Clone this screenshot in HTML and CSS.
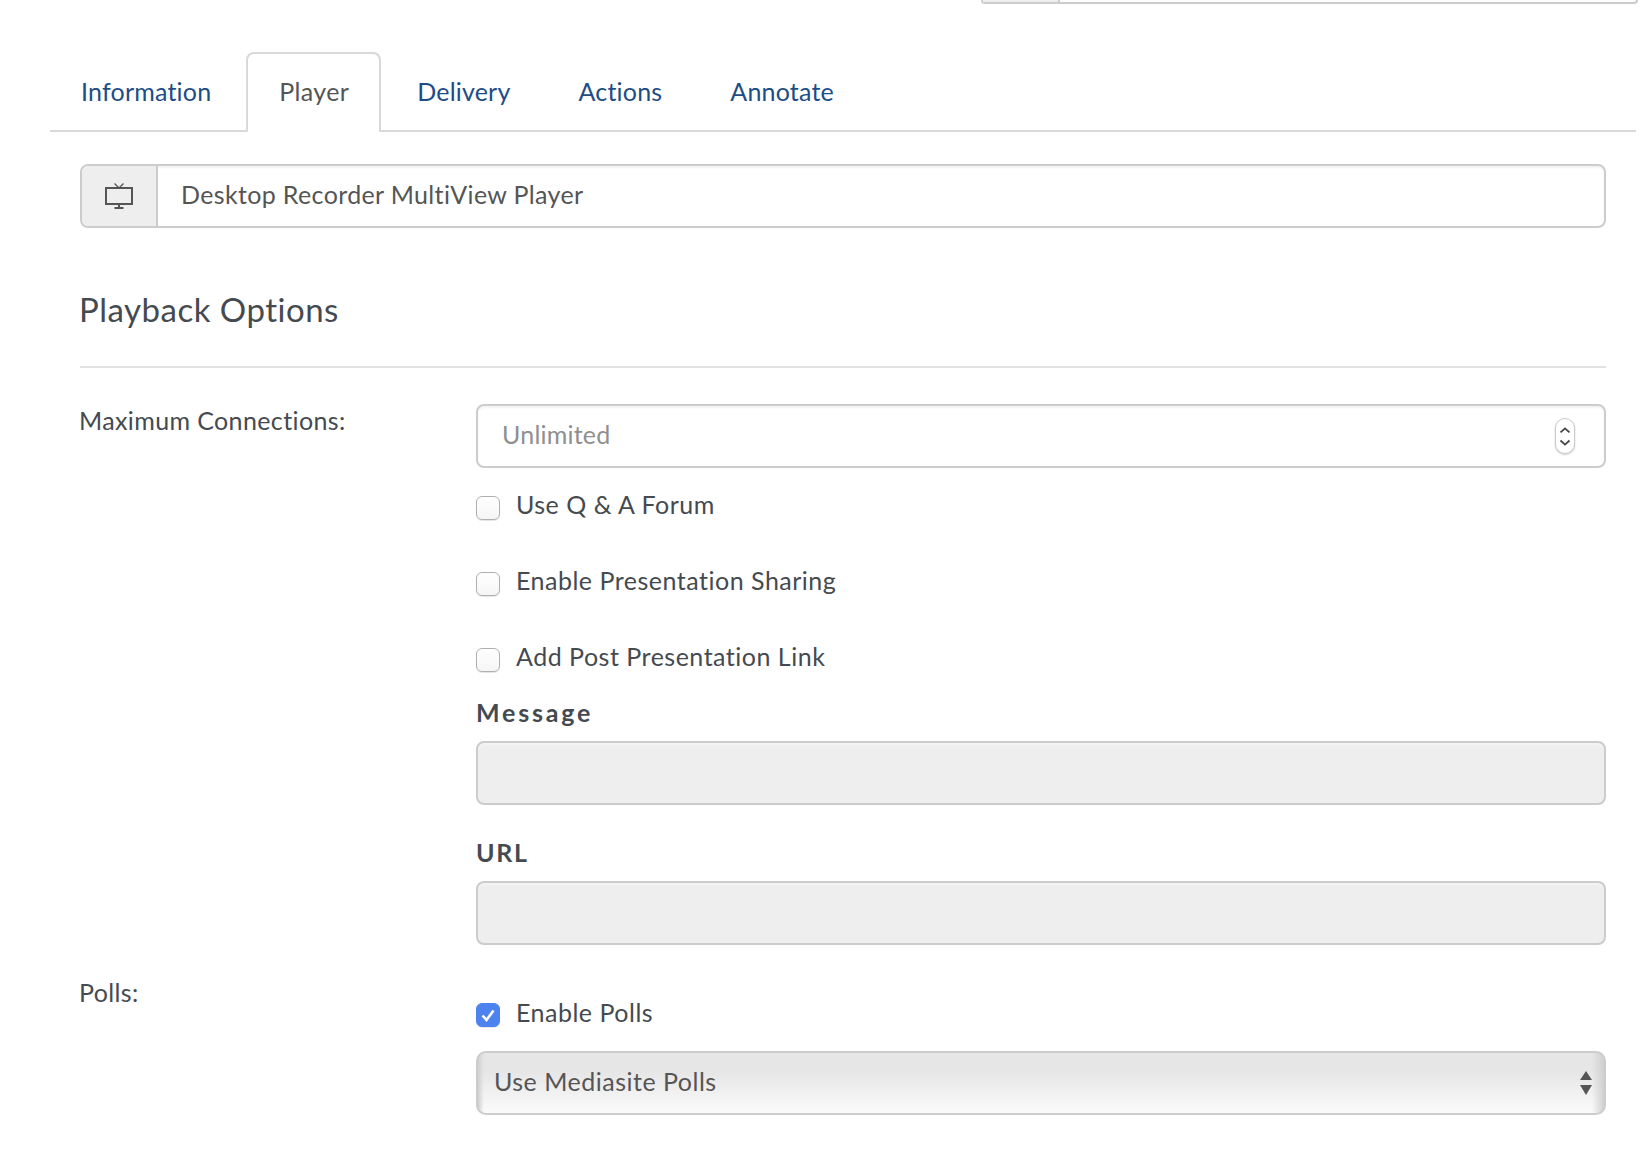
FILE: index.html
```html
<!DOCTYPE html>
<html lang="en">
<head>
<meta charset="utf-8">
<title>Player</title>
<link rel="stylesheet" href="styles.css">
</head>
<body>
<div class="top-strip"><div class="top-field"><span class="top-addon"></span></div></div>
<nav class="tabs">
  <a class="tab">Information</a>
  <a class="tab active">Player</a>
  <a class="tab">Delivery</a>
  <a class="tab">Actions</a>
  <a class="tab">Annotate</a>
</nav>
<main class="content">
  <div class="input-group">
    <span class="addon">
      <svg class="tv" width="30" height="28" viewBox="0 0 30 28" fill="none" stroke="#555" stroke-width="2">
        <rect x="2" y="6" width="26" height="16"/>
        <path d="M15 6 10.500 1.500M15 6 19.500 1.500" stroke-width="1.300"/>
        <path d="M15 22v3M10.500 26h9"/>
      </svg>
    </span>
    <span class="group-value">Desktop Recorder MultiView Player</span>
  </div>
  <h2 class="section-title">Playback Options</h2>
  <div class="form-row first-row">
    <div class="row-label">Maximum Connections:</div>
    <div class="row-body">
      <div class="field number">
        <span class="placeholder">Unlimited</span>
        <span class="spinner">
          <svg width="20" height="36" viewBox="0 0 20 36" fill="none" stroke="#444" stroke-width="2"><path d="M5 14 10 9.500 15 14M5 23 10 27.500 15 23"/></svg>
        </span>
      </div>
      <label class="check first"><span class="box"></span>Use Q &amp; A Forum</label>
      <label class="check"><span class="box"></span>Enable Presentation Sharing</label>
      <label class="check"><span class="box"></span>Add Post Presentation Link</label>
      <div class="sub-label">Message</div>
      <div class="field disabled"></div>
      <div class="sub-label url">URL</div>
      <div class="field disabled"></div>
    </div>
  </div>
  <div class="form-row polls-row">
    <div class="row-label polls-label">Polls:</div>
    <div class="row-body">
      <label class="check polls-check"><span class="box on"><svg width="24" height="24" viewBox="0 0 24 24" fill="none" stroke="#fff" stroke-width="2.600"><path d="M6.500 12.500 10.500 17 17.500 7.500"/></svg></span>Enable Polls</label>
      <div class="select">
        <span class="select-value">Use Mediasite Polls</span>
        <svg width="14" height="24" viewBox="0 0 14 24" fill="#555"><path d="M7 0 13 9H1zM1 14H13L7 24z"/></svg>
      </div>
    </div>
  </div>
</main>
</body>
</html>
```
FILE: styles.css
```css
* { box-sizing: border-box; }
html, body { margin: 0; padding: 0; background: #fff; }
body {
  width: 1652px;
  height: 1152px;
  overflow: hidden;
  font-family: "Lato", "Open Sans", sans-serif;
  font-size: 25px;
  color: #454a50;
}
.top-strip { height: 52px; display: flex; justify-content: flex-end; padding-right: 14px; }
.top-field {
  width: 657px; height: 4px;
  border: 2px solid #ccc; border-top: 0;
  border-radius: 0 0 8px 8px;
  background: #fff;
}
.top-addon { display: block; width: 77px; height: 2px; background: #eee; border-right: 2px solid #ccc; }
.tabs {
  margin: 0 16px 0 50px;
  height: 80px;
  display: flex;
  gap: 6px;
  border-bottom: 2px solid #d9d9d9;
}
.tab {
  height: 80px;
  padding: 21px 29px 0;
  border: 2px solid transparent;
  border-bottom: 0;
  color: #1d4d86;
  line-height: 33px;
  letter-spacing: 0.2px;
  white-space: nowrap;
}
.tab.active {
  color: #555;
  background: #fff;
  border-color: #d9d9d9;
  border-radius: 8px 8px 0 0;
  margin: 0 -1px 0 -2px;
  padding: 21px 30px 0 31px;
  letter-spacing: 0.35px;
}
.content { margin: 0 46px 0 80px; padding-top: 32px; }
.input-group {
  height: 64px;
  display: flex;
  border: 2px solid #ccc;
  border-radius: 8px;
  overflow: hidden;
  box-shadow: inset 0 2px 2px #f4f4f4;
}
.addon {
  width: 76px;
  flex: none;
  background: #eee;
  border-right: 2px solid #ccc;
  display: flex;
  align-items: center;
  justify-content: center;
}
.group-value { padding-left: 23px; line-height: 56px; color: #555; letter-spacing: 0.35px; }
.section-title {
  margin: 0;
  padding-top: 61px;
  height: 140px;
  font-size: 33px;
  line-height: 40px;
  font-weight: 400;
  letter-spacing: 0.5px;
  text-indent: -1px;
  color: #454a50;
  border-bottom: 2px solid #e2e2e2;
}
.form-row { display: flex; }
.first-row { padding-top: 36px; }
.row-label { width: 396px; flex: none; line-height: 34px; letter-spacing: 0.38px; text-indent: -1px; }
.first-row .row-label { line-height: 32px; }
.row-body { flex: 1; min-width: 0; }
.field {
  height: 64px;
  border: 2px solid #ccc;
  border-radius: 8px;
  box-shadow: inset 0 2px 2px #f4f4f4;
}
.field.number {
  display: flex;
  align-items: center;
  justify-content: space-between;
  padding: 0 29px 0 24px;
}
.placeholder { color: #8f8f8f; letter-spacing: 0.22px; padding-bottom: 5px; }
.spinner {
  width: 20px; height: 36px;
  border: 1px solid #ccc;
  border-radius: 10px;
  background: #fff;
  box-shadow: 0 1px 2px #ccc;
  display: flex; align-items: center; justify-content: center;
}
.field.disabled { background: #eee; }
.check {
  display: flex;
  align-items: center;
  height: 34px;
  margin-top: 42px;
  line-height: 34px;
  letter-spacing: 0.5px;
}
.check.first { margin-top: 19px; }
.box {
  width: 24px; height: 24px;
  flex: none;
  margin: 7px 16px 0 0;
  border: 1px solid #b0b0b0;
  border-radius: 6px;
  background: linear-gradient(#fff, #f6f6f6);
  box-shadow: 0 1px 1px #e4e4e4;
}
.box.on { background: #4c83ee; border-color: #4c83ee; margin-top: 5px; }
.box.on svg { display: block; margin: -1px; }
.sub-label {
  margin-top: 22px;
  margin-bottom: 12px;
  height: 34px;
  line-height: 34px;
  font-weight: 700;
  letter-spacing: 2.8px;
}
.sub-label.url { margin-top: 30px; letter-spacing: 1.7px; }
.polls-row { padding-top: 30px; }
.polls-check { margin-top: 20px; }
.select {
  margin-top: 22px;
  height: 64px;
  padding: 0 11px 0 16px;
  border: 2px solid #ccc;
  border-radius: 10px;
  color: #555;
  display: flex;
  align-items: center;
  justify-content: space-between;
  background:
    linear-gradient(90deg, #d0d0d0, transparent 6px, transparent calc(100% - 12px), #d0d0d0),
    linear-gradient(#e6e6e6 30%, #fbfbfb);
}
.select-value { letter-spacing: 0.5px; padding-bottom: 5px; }
```
